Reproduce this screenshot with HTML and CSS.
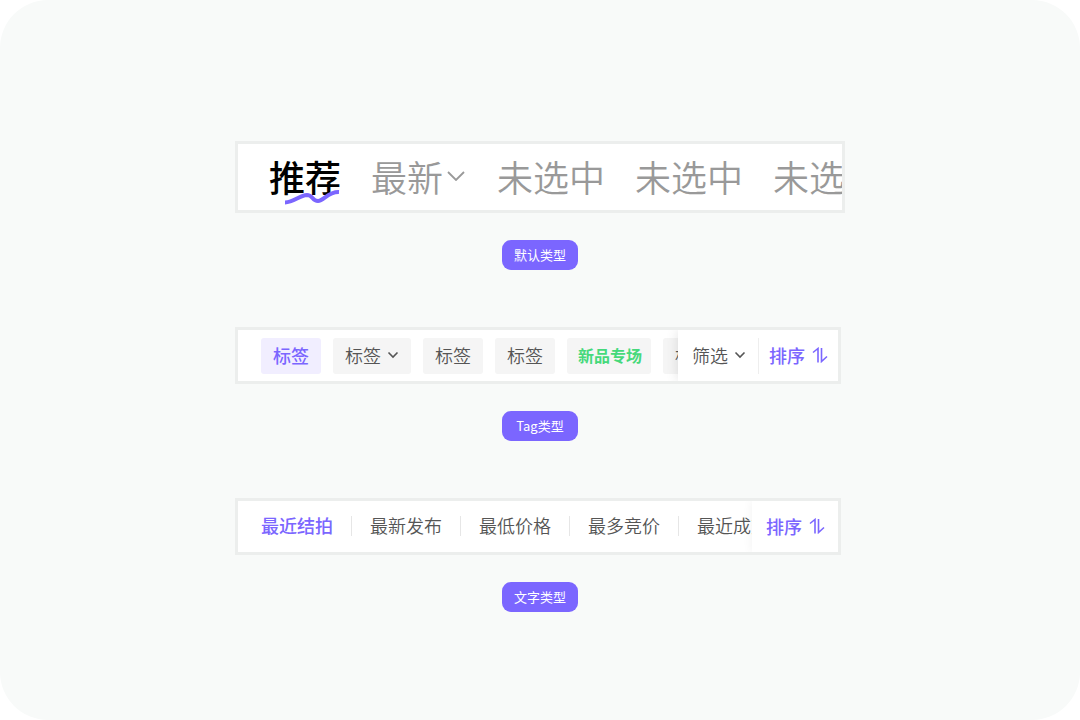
FILE: index.html
```html
<!DOCTYPE html>
<html lang="zh-CN">
<head>
    <meta charset="UTF-8">
    <meta name="viewport" content="width=device-width, initial-scale=1.0">
    <title>标签栏类型</title>
    <link rel="stylesheet" href="styles.css">
</head>
<body>

    <main class="stage">
        <section class="example">
            <nav class="bar bar-default">
                <div class="scroller">
                    <a class="tab active" href="#">推荐
                        <svg class="wave" viewBox="0 0 56 16" width="56" height="16">
                            <path d="M0 13.500C9 13.500 14 6.500 22 6C28 6 27 12 33 12C39 12 43 2.500 54 3" fill="none" stroke="#7b66ff" stroke-width="4"/>
                        </svg>
                    </a>
                    <a class="tab" href="#">最新<svg class="chevron-large" viewBox="0 0 18 10" width="18" height="10"><path d="M1 1l8 8 8-8" fill="none" stroke="currentColor" stroke-width="1.8"/></svg></a>
                    <a class="tab" href="#">未选中</a>
                    <a class="tab" href="#">未选中</a>
                    <a class="tab" href="#">未选中</a>
                </div>
            </nav>
            <p class="badge">默认类型</p>
        </section>

        <section class="example">
            <div class="bar bar-tag">
                <div class="scroller">
                    <button class="tag selected" type="button">标签</button>
                    <button class="tag" type="button">标签<svg class="chevron" viewBox="0 0 12 8" width="12" height="8"><path d="M1.500 1.500L6 6l4.500-4.500" fill="none" stroke="currentColor" stroke-width="1.6"/></svg></button>
                    <button class="tag" type="button">标签</button>
                    <button class="tag" type="button">标签</button>
                    <button class="tag promo" type="button">新品专场</button>
                    <button class="tag" type="button">标签</button>
                </div>
                <div class="actions">
                    <button class="action filter" type="button">筛选<svg class="chevron" viewBox="0 0 12 8" width="12" height="8"><path d="M1.500 1.500L6 6l4.500-4.500" fill="none" stroke="currentColor" stroke-width="1.6"/></svg></button>
                    <button class="action sort" type="button">排序<svg class="sort-icon" viewBox="0 0 16 16" width="16" height="16"><path d="M1 5.500L6 1.500V15.500M9.500 1V14.500L15 9.500" fill="none" stroke="currentColor" stroke-width="1.6"/></svg></button>
                </div>
            </div>
            <p class="badge">Tag类型</p>
        </section>

        <section class="example">
            <div class="bar bar-text">
                <div class="scroller">
                    <a class="text-tab selected" href="#">最近结拍</a>
                    <a class="text-tab" href="#">最新发布</a>
                    <a class="text-tab" href="#">最低价格</a>
                    <a class="text-tab" href="#">最多竞价</a>
                    <a class="text-tab" href="#">最近成交</a>
                </div>
                <div class="actions">
                    <button class="action sort" type="button">排序<svg class="sort-icon" viewBox="0 0 16 16" width="16" height="16"><path d="M1 5.500L6 1.500V15.500M9.500 1V14.500L15 9.500" fill="none" stroke="currentColor" stroke-width="1.6"/></svg></button>
                </div>
            </div>
            <p class="badge">文字类型</p>
        </section>
    </main>

</body>
</html>
```
FILE: styles.css
```css
* {
    box-sizing: border-box;
}
body {
    margin: 0;
    background-color: #fff;
    font-family: "Noto Sans CJK SC", sans-serif;
}
.stage {
    min-height: 100vh;
    padding: 141px 20px 60px;
    display: flex;
    flex-direction: column;
    align-items: center;
    gap: 57px;
    border-radius: 48px;
    background-color: #f8faf9;
}
.example {
    width: 100%;
    max-width: 610px;
    display: flex;
    flex-direction: column;
    align-items: center;
    gap: 27px;
}
.bar {
    width: 100%;
    display: flex;
    align-items: stretch;
    overflow: hidden;
    border: 3px solid #eceeed;
    background-color: #fff;
}
.bar-default {
    height: 72px;
}
.bar-tag,
.bar-text {
    height: 57px;
    max-width: 606px;
    align-self: flex-start;
}
.scroller {
    flex: 1;
    min-width: 0;
    display: flex;
    align-items: center;
    overflow: hidden;
    white-space: nowrap;
}

/* 默认类型 */
.bar-default .scroller {
    gap: 30px;
    padding-left: 31px;
    padding-bottom: 2px;
}
.tab {
    position: relative;
    flex: none;
    display: flex;
    align-items: center;
    color: #999;
    font-size: 36px;
    font-weight: 350;
    line-height: 54px;
    text-decoration: none;
}
.tab.active {
    color: #000;
    font-weight: 500;
}
.wave {
    position: absolute;
    right: 0;
    bottom: -2px;
}
.chevron-large {
    margin: 0 2px 0 4px;
}

/* Tag类型 */
.bar-tag .scroller {
    gap: 12px;
    padding-left: 23px;
}
.tag,
.action {
    flex: none;
    display: flex;
    align-items: center;
    border: none;
    color: #555;
    font-family: inherit;
    font-size: 18px;
    font-weight: 350;
    line-height: 34px;
    cursor: pointer;
}
.tag {
    height: 36px;
    padding: 0 12px 2px;
    border-radius: 3px;
    background-color: #f5f5f5;
}
.tag.selected {
    background-color: #f1eeff;
    color: #7b66ff;
    font-weight: 500;
}
.tag.promo {
    padding: 0 9px 2px 11px;
    color: #45d97b;
    font-size: 16px;
    font-weight: 700;
}
.chevron {
    margin-left: 6px;
}

/* 右侧固定操作 */
.actions {
    flex: none;
    display: flex;
    align-items: center;
    background-color: #fff;
    box-shadow: 0 0 12px rgba(0, 0, 0, 0.12);
}
.action {
    height: 36px;
    padding: 0 10px 2px;
    background-color: transparent;
}
.filter {
    padding: 0 12px 2px 14px;
}
.sort {
    color: #7b66ff;
    font-weight: 500;
}
.filter + .sort {
    border-left: 1px solid #eee;
}
.sort-icon {
    margin-left: 7px;
}

/* 文字类型 */
.bar-text .scroller {
    padding-left: 23px;
    padding-bottom: 2px;
}
.bar-text .actions {
    box-shadow: 0 0 10px rgba(0, 0, 0, 0.06);
}
.text-tab {
    flex: none;
    display: flex;
    align-items: center;
    color: #555;
    font-size: 18px;
    font-weight: 350;
    line-height: 27px;
    text-decoration: none;
}
.text-tab + .text-tab::before {
    content: "";
    width: 1px;
    height: 20px;
    margin: 0 18px;
    background-color: #e6e6e6;
}
.text-tab.selected {
    color: #7b66ff;
    font-weight: 500;
}
.bar-text .sort {
    padding: 0 13px 2px 14px;
}

.badge {
    min-width: 76px;
    margin: 0;
    padding: 0 12px 1px;
    border-radius: 9px;
    background-color: #7b66ff;
    color: #fff;
    font-size: 13px;
    font-weight: 400;
    line-height: 29px;
    text-align: center;
}
```
